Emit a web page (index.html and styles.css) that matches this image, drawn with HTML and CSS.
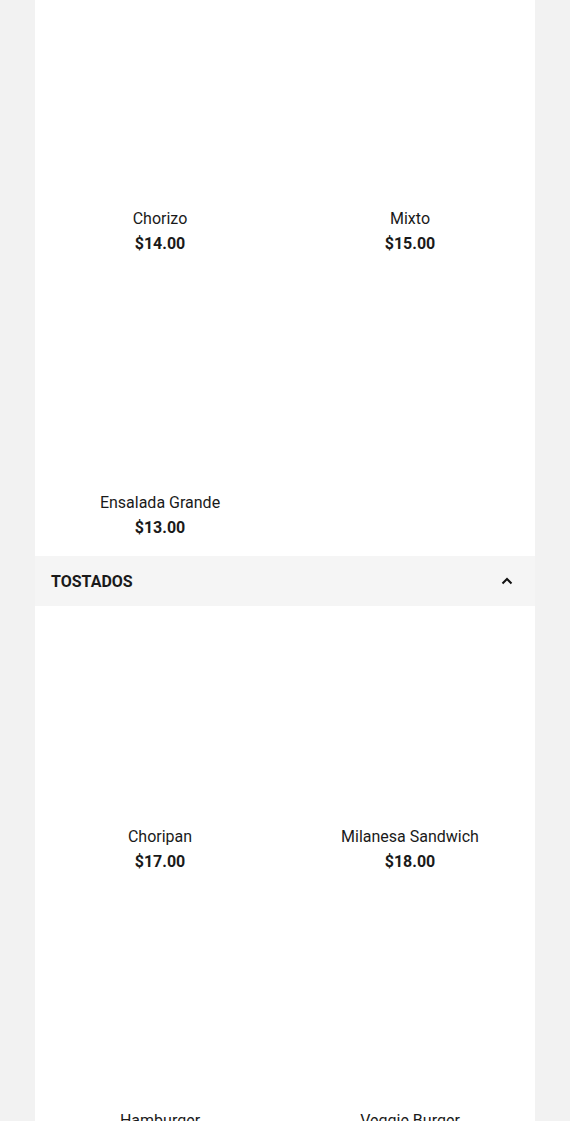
FILE: index.html
```html
<!DOCTYPE html>
<html lang="es">
<head>
<meta charset="utf-8">
<title>Menu</title>
<link rel="stylesheet" href="styles.css">
</head>
<body>
<main class="menu">
  <section class="section">
    <div class="grid">
      <div class="item"><div class="thumb"></div><div class="name">Chorizo</div><div class="price">$14.00</div></div>
      <div class="item"><div class="thumb"></div><div class="name">Mixto</div><div class="price">$15.00</div></div>
      <div class="item"><div class="thumb"></div><div class="name">Ensalada Grande</div><div class="price">$13.00</div></div>
    </div>
  </section>
  <section class="section">
    <div class="section-head">
      <span class="section-title">TOSTADOS</span>
      <svg class="chevron" width="12" height="8" viewBox="0 0 12 8"><polyline points="1.5,6.5 6,2 10.5,6.5" fill="none" stroke="#111" stroke-width="2"/></svg>
    </div>
    <div class="grid">
      <div class="item"><div class="thumb"></div><div class="name">Choripan</div><div class="price">$17.00</div></div>
      <div class="item"><div class="thumb"></div><div class="name">Milanesa Sandwich</div><div class="price">$18.00</div></div>
      <div class="item"><div class="thumb"></div><div class="name">Hamburger</div><div class="price">$16.00</div></div>
      <div class="item"><div class="thumb"></div><div class="name">Veggie Burger</div><div class="price">$16.00</div></div>
    </div>
  </section>
</main>
</body>
</html>
```
FILE: styles.css
```css
html, body {
  margin: 0;
  padding: 0;
  background: #f2f2f2;
  font-family: Roboto, "Liberation Sans", sans-serif;
  color: #1a1a1a;
}
.menu {
  width: 500px;
  margin: -12px auto 0;
  background: #ffffff;
}
.grid {
  display: grid;
  grid-template-columns: 1fr 1fr;
}
.item {
  display: flex;
  flex-direction: column;
  align-items: center;
  padding-bottom: 15px;
}
.thumb {
  height: 219px;
  width: 100%;
}
.name {
  font-size: 16px;
  line-height: 24px;
}
.price {
  font-size: 16px;
  font-weight: 700;
  line-height: 26px;
}
.section-head {
  height: 50px;
  background: #f5f5f5;
  display: flex;
  align-items: center;
  justify-content: space-between;
  padding: 0 22px 0 16px;
}
.section-title {
  font-size: 16px;
  font-weight: 700;
}
.chevron {
  display: block;
}
```
